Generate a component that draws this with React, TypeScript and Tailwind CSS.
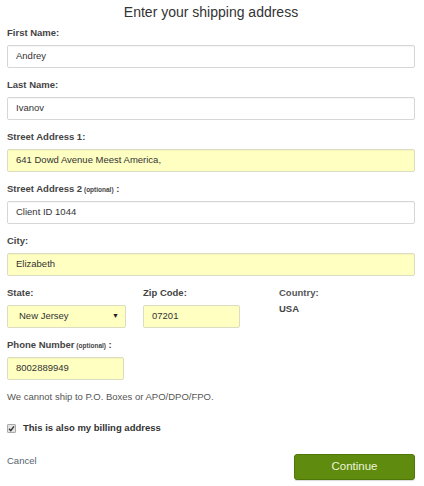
import React from 'react';

const font = { fontFamily: '"Liberation Sans", Arial, sans-serif' };

function Label({ text, optional }: { text: string; optional?: boolean }) {
  return (
    <div className="h-[12px] leading-[12px] text-[9.5px] font-bold text-[#444] mb-[6px]">
      {text}
      {optional && <span className="text-[6.5px] font-bold"> (optional)</span>}
      {optional && ' :'}
    </div>
  );
}

function Field({
  label,
  value,
  optional,
  yellow,
  width,
}: {
  label: string;
  value: string;
  optional?: boolean;
  yellow?: boolean;
  width?: string;
}) {
  return (
    <div className="mb-[11px]">
      <Label text={label} optional={optional} />
      <div
        className={`h-[23px] flex items-center pl-[8px] rounded-[2px] border text-[9.5px] text-[#333] shadow-[inset_0_1px_1px_rgba(0,0,0,0.04)] ${
          yellow ? 'bg-[#ffffc2] border-[#dcdcc0]' : 'bg-white border-[#d6d6d6]'
        } ${width ?? 'w-full'}`}
      >
        {value}
      </div>
    </div>
  );
}

export default function App() {
  return (
    <div className="w-[424px] h-[486px] bg-white px-[7px] pr-[9px]" style={font}>
      {/* Title */}
      <div className="h-[27px] leading-[24px] text-center text-[14px] text-[#333]">
        Enter your shipping address
      </div>

      <Field label="First Name:" value="Andrey" />
      <Field label="Last Name:" value="Ivanov" />
      <Field label="Street Address 1:" value="641 Dowd Avenue Meest America," yellow />
      <Field label="Street Address 2" optional value="Client ID 1044" />
      <Field label="City:" value="Elizabeth" yellow />

      {/* State / Zip / Country */}
      <div className="flex mb-[11px] mt-[1px]">
        <div className="w-[119px] mr-[17px]">
          <Label text="State:" />
          <div className="h-[23px] flex items-center justify-between pl-[11px] pr-[6px] rounded-[2px] border bg-[#ffffc2] border-[#dcdcc0] text-[9.5px] text-[#333]">
            <span>New Jersey</span>
            <span className="text-[7px] text-[#222]">▼</span>
          </div>
        </div>
        <div className="w-[97px] mr-[39px]">
          <Label text="Zip Code:" />
          <div className="h-[23px] flex items-center pl-[8px] rounded-[2px] border bg-[#ffffc2] border-[#dcdcc0] text-[9.5px] text-[#333]">
            07201
          </div>
        </div>
        <div>
          <div className="h-[12px] leading-[12px] text-[9.5px] font-bold text-[#555] mb-[4px]">
            Country:
          </div>
          <div className="text-[9.5px] font-bold text-[#444] leading-[12px]">USA</div>
        </div>
      </div>

      <Field label="Phone Number" optional value="8002889949" yellow width="w-[117px]" />

      <div className="text-[9.5px] text-[#555] leading-[12px] mt-[6px]">
        We cannot ship to P.O. Boxes or APO/DPO/FPO.
      </div>

      {/* Checkbox */}
      <div className="flex items-center mt-[19px] h-[12px]">
        <span className="w-[9px] h-[9px] rounded-[1px] border border-[#aaa] bg-[#e4e4e4] flex items-center justify-center">
          <svg width="7" height="7" viewBox="0 0 10 10">
            <path d="M1.5 5.5 L4 8 L8.5 2" fill="none" stroke="#333" strokeWidth="2" />
          </svg>
        </span>
        <span className="ml-[7px] text-[9.5px] font-bold text-[#333]">This is also my billing address</span>
      </div>

      {/* Actions */}
      <div className="flex justify-between items-start mt-[20px]">
        <span className="text-[9.5px] text-[#56636e]">Cancel</span>
        <button className="w-[121px] h-[26px] rounded-[3px] bg-[#5f8b0e] border border-[#4f7808] text-[11.5px] text-[#eef5dc] shadow-[0_1px_1px_rgba(0,0,0,0.15)]">
          Continue
        </button>
      </div>
    </div>
  );
}
